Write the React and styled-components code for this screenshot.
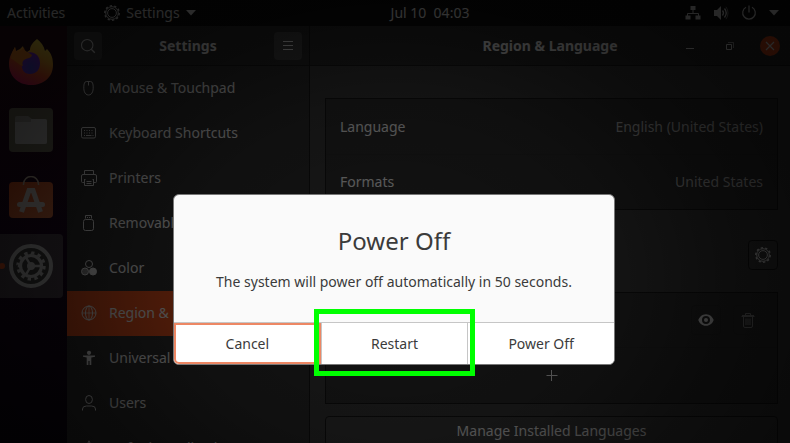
import React from "react";
import styled, { createGlobalStyle } from "styled-components";

const GlobalStyle = createGlobalStyle`
  * { box-sizing: border-box; }
  html, body, #root { height: 100%; margin: 0; }
  body {
    overflow: hidden;
    background: #000;
    font-family: "Noto Sans", "Open Sans", sans-serif;
    font-size: 14px;
    line-height: 20px;
  }
  button, a { font: inherit; color: inherit; text-decoration: none; }
  button { margin: 0; padding: 0; border: 0; background: none; cursor: pointer; }
  svg { display: block; flex: none; }
`;

const Desktop = styled.div`
  position: relative;
  height: 100%;
  min-height: 100vh;
  display: flex;
  flex-direction: column;
  overflow: hidden;
  color: #eeeeee;
`;

const TopBar = styled.header`
  flex: none;
  display: grid;
  grid-template-columns: 1fr auto 1fr;
  align-items: center;
  height: 26px;
  padding: 0 11px 0 7px;
  background: #0c0c0c;
`;

const BarGroup = styled.div`
  display: flex;
  align-items: center;
  justify-content: ${(p) => (p.$end ? "flex-end" : "flex-start")};
  gap: ${(p) => (p.$end ? "12px" : "39px")};
`;

const BarButton = styled.button`
  display: flex;
  align-items: center;
  gap: 6px;
  color: #e6e6e6;
  white-space: pre;
`;

const Clock = styled(BarButton)`
  margin-left: 74px;
`;

const Workspace = styled.div`
  flex: 1;
  min-height: 0;
  display: flex;
`;

const Dock = styled.nav`
  flex: none;
  display: flex;
  flex-direction: column;
  gap: 4px;
  width: 67px;
  padding: 4px 4px 0 0;
  background: linear-gradient(#2a0a16, #1c0620 50%, #0c0412);
`;

const DockItem = styled.button`
  position: relative;
  display: grid;
  place-items: center;
  height: 64px;
  padding-right: 1px;
  border-radius: 0 4px 4px 0;
  background: ${(p) => (p.$active ? "#4c424c" : "transparent")};
`;

const RunningDot = styled.span`
  position: absolute;
  left: -1px;
  top: 29px;
  width: 6px;
  height: 6px;
  border-radius: 3px;
  background: #e95420;
`;

const Window = styled.section`
  flex: 1;
  min-width: 0;
  display: flex;
`;

const Side = styled.aside`
  flex: none;
  width: 243px;
  display: flex;
  flex-direction: column;
  border-right: 1px solid #151515;
  background: #2f2f2f;
`;

const Main = styled.main`
  flex: 1;
  min-width: 0;
  display: flex;
  flex-direction: column;
  background: #3a3a3a;
`;

const HeaderBar = styled.div`
  flex: none;
  display: grid;
  grid-template-columns: 1fr auto 1fr;
  align-items: center;
  height: 40px;
  padding: 0 ${(p) => (p.$wide ? "10px" : "7px")};
  border-bottom: 1px solid #191919;
  background: #2a2a2a;
`;

const Title = styled.h1`
  grid-column: 2;
  margin: 0;
  font-size: 14px;
  line-height: 20px;
  font-weight: 700;
`;

const HeaderButton = styled.button`
  display: grid;
  place-items: center;
  justify-self: ${(p) => (p.$end ? "end" : "start")};
  width: 28px;
  height: 28px;
  border-radius: 4px;
  background: #454545;
`;

const WindowControls = styled.div`
  display: flex;
  justify-content: flex-end;
  gap: 20px;
`;

const WindowControl = styled.button`
  display: grid;
  place-items: center;
  width: 20px;
  height: 20px;
  border-radius: 10px;
  background: ${(p) => (p.$close ? "#e04a18" : "transparent")};
`;

const SideLink = styled.a`
  flex: none;
  display: flex;
  align-items: center;
  gap: 12px;
  height: 45px;
  padding: 0 0 2px 14px;
  white-space: nowrap;
  background: ${(p) => (p.$active ? "#e4501c" : "transparent")};
`;

const Content = styled.div`
  flex: 1;
  min-height: 0;
  display: flex;
  flex-direction: column;
  padding: 32px 12px 0 15px;
`;

const ListBox = styled.div`
  flex: none;
  border: 1px solid #151515;
  background: #2e2e2e;
`;

const SettingRow = styled.button`
  display: flex;
  align-items: center;
  justify-content: ${(p) => (p.$center ? "center" : "space-between")};
  width: 100%;
  height: 55px;
  padding: 0 14px;
  & + & { border-top: 1px solid #2a2a2a; }
`;

const Value = styled.span`
  color: #bcbcbc;
`;

const SectionHead = styled.div`
  flex: none;
  display: flex;
  justify-content: flex-end;
  padding: 30px 0 22px;
`;

const SourceRow = styled.div`
  display: flex;
  align-items: center;
  justify-content: flex-end;
  gap: 12px;
  height: 55px;
  padding: 0 14px;
  border-bottom: 1px solid #2a2a2a;
`;

const ToolButton = styled.button`
  display: grid;
  place-items: center;
  width: 30px;
  height: 30px;
  border: 1px solid ${(p) => (p.$raised ? "#151515" : "#292929")};
  border-radius: 4px;
  background: ${(p) => (p.$raised ? "#3d3d3d" : "transparent")};
  opacity: ${(p) => (p.disabled ? 0.5 : 1)};
`;

const WideButton = styled.button`
  flex: none;
  height: 30px;
  margin-top: 12px;
  border: 1px solid #151515;
  border-radius: 4px;
  background: #3d3d3d;
`;

const Shade = styled.div`
  position: absolute;
  inset: 0;
  display: flex;
  align-items: flex-start;
  justify-content: center;
  padding: 194px 2px 0 0;
  background: radial-gradient(
    ellipse 450px 350px at 50% 279px,
    rgba(0, 0, 0, 0.58) 0%,
    rgba(0, 0, 0, 0.67) 50%,
    rgba(0, 0, 0, 0.78) 74%,
    rgba(0, 0, 0, 0.83) 95%
  );
`;

const Dialog = styled.div`
  width: 442px;
  max-width: 90%;
  border: 1px solid #777777;
  border-radius: 6px;
  background: #fafafa;
  color: #3b3b3b;
  text-align: center;
`;

const DialogTitle = styled.h2`
  margin: 0;
  padding-top: 30px;
  font-size: 24px;
  line-height: 32px;
  font-weight: 400;
`;

const DialogText = styled.p`
  margin: 0;
  padding: 15px 12px 30px;
  white-space: nowrap;
`;

const DialogButtons = styled.div`
  display: grid;
  grid-template-columns: repeat(3, 1fr);
  border-top: 1px solid #c6c6c6;
  border-radius: 0 0 5px 5px;
  background: #ffffff;
`;

const DialogButton = styled.button`
  position: relative;
  height: 41px;
  border-left: ${(p) => (p.$divided ? "1px solid #c6c6c6" : "0")};
  border-radius: ${(p) => (p.$focused ? "0 0 0 5px" : "0")};
  box-shadow: ${(p) => (p.$focused ? "inset 0 0 0 2px #ed8764" : "none")};
`;

const Highlight = styled.span`
  position: absolute;
  inset: -14px -8px -12px -8px;
  z-index: 1;
  border: 5px solid #00ff00;
  pointer-events: none;
`;

const Icon = ({ size = 16, children, ...rest }) => (
  <svg
    width={size}
    height={size}
    viewBox="0 0 16 16"
    fill="none"
    stroke="currentColor"
    strokeWidth="1"
    aria-hidden="true"
    {...rest}
  >
    {children}
  </svg>
);

const Caret = () => (
  <svg width="10" height="6" viewBox="0 0 10 6" fill="currentColor" aria-hidden="true">
    <path d="M0 0h10L5 5.5z" />
  </svg>
);

const GearIcon = () => (
  <Icon>
    <circle cx="8" cy="8" r="7.2" pathLength="20" strokeDasharray="1 1" strokeWidth="1.5" />
    <circle cx="8" cy="8" r="6.3" />
    <circle cx="8" cy="8" r="4.4" />
  </Icon>
);

const NetworkIcon = () => (
  <Icon>
    <path d="M8 4v4M2.500 12V8.500h11V12" />
    <path d="M5.500 1h5v4h-5zM.5 10.500h5v4h-5zM10.500 10.500h5v4h-5z" fill="currentColor" stroke="none" />
  </Icon>
);

const VolumeIcon = () => (
  <Icon>
    <path d="M1 5h3l4-4v14l-4-4H1z" fill="currentColor" stroke="none" />
    <path d="M9.500 5.500q2 2.500 0 5M11.500 3.500q3.500 4.500 0 9" strokeWidth="1.3" />
    <path d="M13 1.800q4 6.200 0 12.400" opacity=".5" />
  </Icon>
);

const PowerIcon = () => (
  <Icon>
    <path d="M5 2.200a6.300 6.300 0 1 0 6 0M8 .5v7" strokeWidth="1.200" />
  </Icon>
);

const SearchIcon = () => (
  <Icon>
    <circle cx="7.200" cy="7.200" r="5.700" strokeWidth="1.100" />
    <path d="M11.300 11.300l3.500 3.500" strokeWidth="1.300" />
  </Icon>
);

const MenuIcon = () => (
  <Icon>
    <path d="M3 3.500h10M3 7.500h10M3 11.500h10" />
  </Icon>
);

const MouseIcon = () => (
  <Icon>
    <path d="M5.500 1.500h4q2 0 2.400 2.500c1 6-.4 11-4.400 11s-5.400-5-4.400-11q.4-2.500 2.400-2.500zM7.500 2v3.500" />
  </Icon>
);

const KeyboardIcon = () => (
  <Icon>
    <rect x=".5" y="2.500" width="14" height="10.500" rx="1.500" />
    <path d="M3 5.500h10M3 8h10" strokeDasharray="1 1.500" />
    <path d="M3 10.500h1M5 10.500h5.500M11.500 10.500h1" />
  </Icon>
);

const PrinterIcon = () => (
  <Icon>
    <path d="M3.500 4V.5h9V4M3 12.500H1.500q-1 0-1-1V6q0-1.500 1.500-1.500h12q1.500 0 1.500 1.500v5.500q0 1-1 1H13" />
    <path d="M3.500 9.500v6h9v-6M3 9.500h1.500M11.500 9.500H13M5.500 11.500h5M5.500 13.500h5" />
  </Icon>
);

const UsbIcon = () => (
  <Icon>
    <path d="M4.500 3.500v-3h6v3M6 2.500h1M8 2.500h1" />
    <rect x="2.500" y="4.500" width="10" height="11" rx="2" />
  </Icon>
);

const ColorIcon = () => (
  <Icon>
    <circle cx="8" cy="4" r="3.500" />
    <circle cx="4" cy="11.500" r="3.500" fill="currentColor" fillOpacity=".5" />
    <circle cx="12" cy="11.500" r="3.500" fill="currentColor" />
  </Icon>
);

const GlobeIcon = () => (
  <Icon>
    <circle cx="8" cy="8" r="7" />
    <ellipse cx="8" cy="8" rx="3.500" ry="7" />
    <path d="M8 1v14M1 8h14" opacity=".7" />
  </Icon>
);

const AccessIcon = () => (
  <Icon stroke="none" fill="currentColor">
    <circle cx="8" cy="2.800" r="2.100" />
    <path d="M2 5.500h12v1.300l-3.700.7V15H8.600v-4H7.400v4H5.700V7.500L2 6.800z" />
  </Icon>
);

const UserIcon = () => (
  <Icon>
    <ellipse cx="8" cy="4.500" rx="3.400" ry="4" />
    <path d="M1.500 15.500v-1.500q0-3 4-3h5q4 0 4 3v1.500" />
  </Icon>
);

const StarIcon = () => (
  <Icon>
    <path d="M8 .8l2.200 4.700 5 .7-3.700 3.500.9 5.200L8 12.400l-4.400 2.500.9-5.200L.8 6.200l5-.7z" />
  </Icon>
);

const EyeIcon = () => (
  <Icon>
    <path
      d="M8 2.200C4 2.200 1.300 5 .3 8c1 3 3.700 5.800 7.700 5.800S14.700 11 15.700 8C14.700 5 12 2.200 8 2.200zM8 4a4 4 0 1 1 0 8 4 4 0 0 1 0-8z"
      fill="currentColor"
      fillRule="evenodd"
      stroke="none"
    />
    <circle cx="8" cy="8" r="2" fill="currentColor" stroke="none" />
  </Icon>
);

const TrashIcon = () => (
  <Icon>
    <path d="M1.500 4.500h13M2 3.500h12M5.500 3V1.500h5V3M3.500 5v9q0 1.500 1.500 1.500h6q1.500 0 1.500-1.500V5" />
    <path d="M6 6.500V13M8 6.500V13M10 6.500V13" />
  </Icon>
);

const PlusIcon = () => (
  <Icon size={12} viewBox="0 0 12 12">
    <path d="M.5 5.500h11M5.500 0v11" />
  </Icon>
);

const MinimizeIcon = () => (
  <Icon>
    <path d="M4 10.500h8" />
  </Icon>
);

const RestoreIcon = () => (
  <Icon>
    <path d="M4.500 6.500h5v5h-5z" />
    <path d="M6 4.500h5.500V10" opacity=".6" />
  </Icon>
);

const CloseIcon = () => (
  <Icon>
    <path d="M4 4l8 8M12 4l-8 8" strokeWidth="1.200" />
  </Icon>
);

const FirefoxIcon = () => (
  <svg width="46" height="48" viewBox="0 0 46 48" aria-hidden="true">
    <defs>
      <linearGradient id="fox" x1=".8" y1="0" x2=".3" y2="1">
        <stop offset="0" stopColor="#fff04a" />
        <stop offset=".35" stopColor="#ffb52c" />
        <stop offset=".65" stopColor="#ff5a2a" />
        <stop offset="1" stopColor="#e8176e" />
      </linearGradient>
      <radialGradient id="globe" cx=".5" cy=".7" r=".7">
        <stop offset="0" stopColor="#4a4ae0" />
        <stop offset="1" stopColor="#8a2be0" />
      </radialGradient>
    </defs>
    <path
      d="M29 1c4 3 7 7 8 12l2-2c5 5 6 10 6 16 0 12-9 20-22 20S1 38 1 26C1 19 4 14 7 9l1 4 4-2 3-3c0 3 2 5 4 6l3-2c0-4 3-8 7-11z"
      fill="url(#fox)"
    />
    <path d="M15 17c7-6 17-2 17 8 0 7-4 11-10 11s-9-5-8-10z" fill="url(#globe)" />
    <path d="M7 9l1 5c4-1 6-2 8-5 0 4 3 5 5 6l3 2c-1 4-6 3-8 5s-2 3-1 6C9 26 5 20 3 21c0-5 2-8 4-12z" fill="#ff8a22" />
  </svg>
);

const FilesIcon = () => (
  <svg width="44" height="44" viewBox="0 0 44 44" aria-hidden="true">
    <rect width="44" height="44" rx="4" fill="#75725f" />
    <path d="M6 10q0-2 2-2h11l4 3h13q2 0 2 2v21q0 2-2 2H8q-2 0-2-2z" fill="#a3a19b" />
    <path d="M6 14h16V11h14q2 0 2 2v21q0 2-2 2H8q-2 0-2-2z" fill="#c4c3c1" />
  </svg>
);

const SoftwareIcon = () => (
  <svg width="44" height="44" viewBox="0 0 44 44" fill="none" aria-hidden="true">
    <defs>
      <linearGradient id="bag" x1="0" y1="0" x2="1" y2="1">
        <stop offset="0" stopColor="#d9501e" />
        <stop offset="1" stopColor="#dd7545" />
      </linearGradient>
    </defs>
    <rect y="6" width="44" height="36" rx="4" fill="url(#bag)" />
    <path d="M14.500 9V8a7.500 7.500 0 0 1 15 0v1" stroke="#c8b7a4" strokeWidth="1.500" />
    <path d="M12.500 36l7.500-21.500h4L31.500 36" stroke="#d8cfca" strokeWidth="5" />
    <rect x="8" y="26" width="28" height="5" rx="2.500" fill="#d8cfca" />
  </svg>
);

const SettingsAppIcon = () => (
  <svg width="44" height="44" viewBox="0 0 44 44" fill="none" stroke="#c4c4c4" aria-hidden="true">
    <circle cx="22" cy="22" r="20" fill="#40403f" strokeWidth="4" />
    <circle cx="22" cy="22" r="13.200" strokeWidth="3" pathLength="24" strokeDasharray="1 1" />
    <circle cx="22" cy="22" r="10.500" strokeWidth="3.200" />
    <circle cx="22" cy="22" r="4" fill="#c4c4c4" stroke="none" />
    <path d="M22 22h10M22 22l-5-8.600M22 22l-5 8.600" strokeWidth="2.400" />
  </svg>
);

const sections = [
  ["Mouse & Touchpad", MouseIcon],
  ["Keyboard Shortcuts", KeyboardIcon],
  ["Printers", PrinterIcon],
  ["Removable Media", UsbIcon],
  ["Color", ColorIcon],
  ["Region & Language", GlobeIcon],
  ["Universal Access", AccessIcon],
  ["Users", UserIcon],
  ["Default Applications", StarIcon],
];

const dockApps = [
  ["Firefox", FirefoxIcon],
  ["Files", FilesIcon],
  ["Ubuntu Software", SoftwareIcon],
  ["Settings", SettingsAppIcon],
];

export default function App() {
  return (
    <Desktop>
      <GlobalStyle />
      <TopBar>
        <BarGroup>
          <BarButton>Activities</BarButton>
          <BarButton>
            <GearIcon />
            Settings
            <Caret />
          </BarButton>
        </BarGroup>
        <Clock>{"Jul 10  04:03"}</Clock>
        <BarGroup $end>
          <BarButton aria-label="Network"><NetworkIcon /></BarButton>
          <BarButton aria-label="Volume"><VolumeIcon /></BarButton>
          <BarButton aria-label="Power"><PowerIcon /></BarButton>
          <BarButton aria-label="System menu"><Caret /></BarButton>
        </BarGroup>
      </TopBar>

      <Workspace>
        <Dock aria-label="Dock">
          {dockApps.map(([name, AppIcon]) => (
            <DockItem key={name} aria-label={name} $active={name === "Settings"}>
              {name === "Settings" && <RunningDot />}
              <AppIcon />
            </DockItem>
          ))}
        </Dock>

        <Window>
          <Side>
            <HeaderBar>
              <HeaderButton aria-label="Search"><SearchIcon /></HeaderButton>
              <Title>Settings</Title>
              <HeaderButton $end aria-label="Menu"><MenuIcon /></HeaderButton>
            </HeaderBar>
            {sections.map(([name, SectionIcon]) => (
              <SideLink key={name} href="#" $active={name === "Region & Language"}>
                <SectionIcon />
                {name}
              </SideLink>
            ))}
          </Side>

          <Main>
            <HeaderBar $wide>
              <Title as="h2">Region &amp; Language</Title>
              <WindowControls>
                <WindowControl aria-label="Minimize"><MinimizeIcon /></WindowControl>
                <WindowControl aria-label="Restore"><RestoreIcon /></WindowControl>
                <WindowControl $close aria-label="Close"><CloseIcon /></WindowControl>
              </WindowControls>
            </HeaderBar>
            <Content>
              <ListBox>
                <SettingRow>
                  Language
                  <Value>English (United States)</Value>
                </SettingRow>
                <SettingRow>
                  Formats
                  <Value>United States</Value>
                </SettingRow>
              </ListBox>
              <SectionHead>
                <ToolButton $raised aria-label="Input source options"><GearIcon /></ToolButton>
              </SectionHead>
              <ListBox>
                <SourceRow>
                  <ToolButton aria-label="Show layout"><EyeIcon /></ToolButton>
                  <ToolButton disabled aria-label="Remove"><TrashIcon /></ToolButton>
                </SourceRow>
                <SettingRow $center aria-label="Add input source"><PlusIcon /></SettingRow>
              </ListBox>
              <WideButton>Manage Installed Languages</WideButton>
            </Content>
          </Main>
        </Window>
      </Workspace>

      <Shade>
        <Dialog role="dialog" aria-modal="true" aria-labelledby="dialog-title">
          <DialogTitle id="dialog-title">Power Off</DialogTitle>
          <DialogText>The system will power off automatically in 50 seconds.</DialogText>
          <DialogButtons>
            <DialogButton $focused>Cancel</DialogButton>
            <DialogButton $divided>
              Restart
              <Highlight />
            </DialogButton>
            <DialogButton $divided>Power Off</DialogButton>
          </DialogButtons>
        </Dialog>
      </Shade>
    </Desktop>
  );
}
